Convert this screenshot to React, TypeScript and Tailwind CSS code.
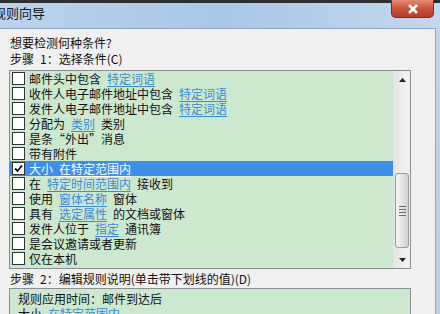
import React from "react";

type Part = { t: string; link?: boolean };

const S = "\u2002";

const rules: { parts: Part[]; checked?: boolean }[] = [
  { parts: [{ t: "邮件头中包含" + S }, { t: "特定词语", link: true }] },
  { parts: [{ t: "收件人电子邮件地址中包含" + S }, { t: "特定词语", link: true }] },
  { parts: [{ t: "发件人电子邮件地址中包含" + S }, { t: "特定词语", link: true }] },
  { parts: [{ t: "分配为" + S }, { t: "类别", link: true }, { t: S + "类别" }] },
  { parts: [{ t: "是条“外出”消息" }] },
  { parts: [{ t: "带有附件" }] },
  { parts: [{ t: "大小" + S }, { t: "在特定范围内", link: true }], checked: true },
  { parts: [{ t: "在" + S }, { t: "特定时间范围内", link: true }, { t: S + "接收到" }] },
  { parts: [{ t: "使用" + S }, { t: "窗体名称", link: true }, { t: S + "窗体" }] },
  { parts: [{ t: "具有" + S }, { t: "选定属性", link: true }, { t: S + "的文档或窗体" }] },
  { parts: [{ t: "发件人位于" + S }, { t: "指定", link: true }, { t: S + "通讯簿" }] },
  { parts: [{ t: "是会议邀请或者更新" }] },
  { parts: [{ t: "仅在本机" }] },
];

function Checkbox({ checked }: { checked?: boolean }) {
  return (
    <div className="w-[13px] h-[13px] shrink-0 bg-white border border-[#333333] flex items-center justify-center">
      {checked && (
        <svg width="9" height="9" viewBox="0 0 9 9">
          <path d="M1 4.5 L3.5 7 L8 1.5" stroke="#000" strokeWidth="1.8" fill="none" />
        </svg>
      )}
    </div>
  );
}

function Arrow({ up }: { up?: boolean }) {
  return (
    <svg width="7" height="4" viewBox="0 0 7 4">
      <path d={up ? "M0 4 L3.5 0 L7 4 Z" : "M0 0 L3.5 4 L7 0 Z"} fill="#222" />
    </svg>
  );
}

export default function App() {
  return (
    <div
      className="w-[440px] h-[314px] overflow-hidden flex flex-col bg-gradient-to-b from-[#c3d7ec] to-[#b9d0e8] text-[12px] text-[#111]"
      style={{ fontFamily: '"Noto Sans CJK SC", "Liberation Sans", sans-serif' }}
    >
      {/* title bar */}
      <div className="h-[28px] shrink-0 border-t-[3px] border-[#2e2e2e] flex justify-between bg-gradient-to-r from-[#bcd4ec] via-[#a9c7e7] to-[#c4d8ee]">
        <div className="-ml-[7px] mt-[1px] text-[13px] leading-[18px] text-[#151515]">规则向导</div>
        <div className="-mt-[3px] mr-[6px] w-[43px] h-[18px] rounded-b-[5px] border border-t-0 border-[#7a2c22] bg-gradient-to-b from-[#e58a73] via-[#cb533c] to-[#b83b27] flex items-center justify-center">
          <svg width="12" height="10" viewBox="0 0 12 10">
            <path d="M2 1 L10 9 M10 1 L2 9" stroke="#fff" strokeWidth="2.6" />
          </svg>
        </div>
      </div>

      {/* dialog body */}
      <div className="flex-1 mr-[4px] bg-[#f0f0f0] border-t border-r border-[#90a4bb] pl-[9px] pt-[6px]">
        <div className="leading-[16px] pl-[1px]">想要检测何种条件?</div>
        <div className="leading-[16px] pl-[1px] whitespace-pre">步骤{S}1：选择条件(C)</div>

        <div className="mt-[3px] w-[402px] h-[199px] border border-[#8b8e93] flex">
          <div className="flex-1 bg-[#cce8cf] flex flex-col">
            {rules.map((r, i) => (
              <div
                key={i}
                className={`h-[15px] flex items-center pl-[2px] ${r.checked ? "bg-[#3d8fe8] text-white" : ""}`}
              >
                <Checkbox checked={r.checked} />
                <div className="ml-[4px] whitespace-pre leading-[15px]">
                  {r.parts.map((p, j) =>
                    p.link ? (
                      <span
                        key={j}
                        className={`underline underline-offset-2 ${r.checked ? "text-white" : "text-[#3b8ad6]"}`}
                      >
                        {p.t}
                      </span>
                    ) : (
                      <span key={j}>{p.t}</span>
                    )
                  )}
                </div>
              </div>
            ))}
          </div>

          {/* scrollbar */}
          <div className="w-[17px] flex flex-col bg-gradient-to-r from-[#e6e6e6] to-[#f3f3f3] border-l border-[#e2e2e2]">
            <div className="h-[17px] flex items-center justify-center">
              <Arrow up />
            </div>
            <div className="flex-1">
              <div className="mt-[85px] mx-[1px] h-[75px] rounded-[3px] border border-[#9a9a9a] bg-gradient-to-r from-[#f4f4f4] via-[#e6e6e6] to-[#cfcfcf] flex flex-col items-center justify-center gap-[2px]">
                <div className="w-[7px] h-[1px] bg-[#6e6e6e]" />
                <div className="w-[7px] h-[1px] bg-[#6e6e6e]" />
                <div className="w-[7px] h-[1px] bg-[#6e6e6e]" />
                <div className="w-[7px] h-[1px] bg-[#6e6e6e]" />
              </div>
            </div>
            <div className="h-[17px] flex items-center justify-center">
              <Arrow />
            </div>
          </div>
        </div>

        <div className="h-[19px] leading-[19px] pl-[1px] whitespace-pre">步骤{S}2：编辑规则说明(单击带下划线的值)(D)</div>

        <div className="w-[402px] h-[60px] border border-[#8b8e93] bg-[#cce8cf] pl-[8px] pt-[2px]">
          <div className="h-[15px] leading-[15px]">规则应用时间：邮件到达后</div>
          <div className="h-[15px] leading-[15px] whitespace-pre">
            大小{S}<span className="text-[#3b8ad6] underline underline-offset-2">在特定范围内</span>
          </div>
        </div>
      </div>
    </div>
  );
}
